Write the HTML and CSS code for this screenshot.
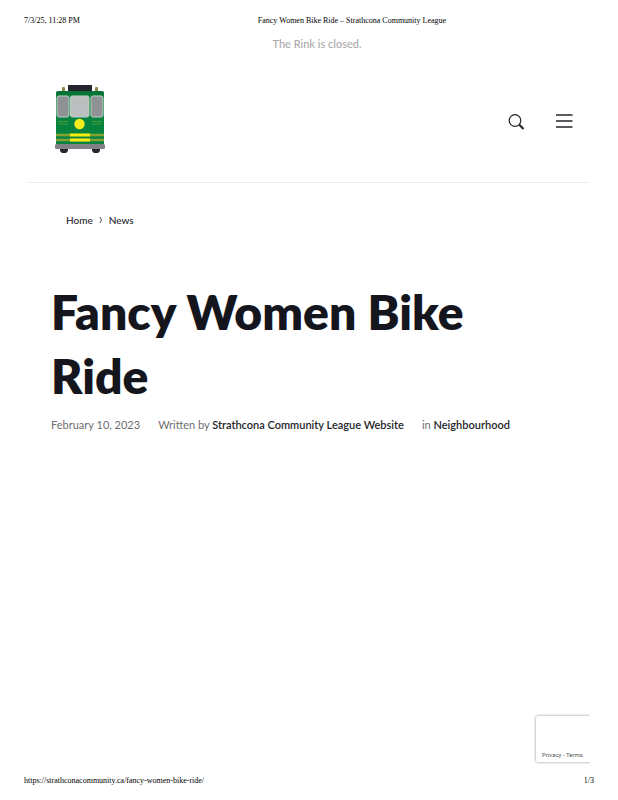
FILE: index.html
```html
<!DOCTYPE html>
<html lang="en">
<head>
<meta charset="utf-8">
<meta name="viewport" content="width=device-width, initial-scale=1">
<title>Fancy Women Bike Ride – Strathcona Community League</title>
<link rel="stylesheet" href="styles.css">
</head>
<body>
<div class="sheet-row sheet-top">
  <span>7/3/25, 11:28 PM</span>
  <span class="sheet-title">Fancy Women Bike Ride – Strathcona Community League</span>
</div>
<div class="page">
  <p class="notice">The Rink is closed.</p>
  <header class="site-header">
    <a class="logo" href="#" aria-label="Strathcona Community League">
      <svg width="52" height="72" viewBox="0 0 52 72" aria-hidden="true">
        <rect x="14" y="2" width="24" height="6" fill="#25262b"/>
        <rect x="8" y="4" width="3" height="5" rx="1" fill="#8a8a4a"/>
        <rect x="41" y="4" width="3" height="5" rx="1" fill="#8a8a4a"/>
        <path d="M2 11Q2 8 5 8H47Q50 8 50 11V61H2Z" fill="#08833f"/>
        <path d="M2 12V10Q2 8 5 8H47Q50 8 50 10V12Z" fill="#087239"/>
        <rect x="3" y="13" width="12" height="21" rx="2" fill="#8e9295" stroke="#b9cfc1"/>
        <rect x="16.500" y="13" width="18.500" height="21" rx="2" fill="#bcbec0" stroke="#b9cfc1"/>
        <rect x="37" y="13" width="12" height="21" rx="2" fill="#8e9295" stroke="#b9cfc1"/>
        <path d="M4 38.500H14M4 41H14M38 38.500H48M38 41H48" stroke="#479b35"/>
        <circle cx="25.500" cy="41" r="5.200" fill="#f3ed20"/>
        <path d="M2 52H50M2 57H50" stroke="#85a331" stroke-width="2.500"/>
        <path d="M16 52H36M16 57H36" stroke="#f7ec13" stroke-width="3"/>
        <rect x="1" y="61" width="50" height="5" rx="1.500" fill="#808285"/>
        <path d="M6 66H14V68L12 70H8L6 68ZM38 66H46V68L44 70H40L38 68Z" fill="#25262b"/>
      </svg>
    </a>
    <div class="actions">
      <button class="icon-button" type="button" aria-label="Search">
        <svg width="18" height="18" viewBox="0 0 18 18" fill="none" stroke="#25262b" aria-hidden="true">
          <circle cx="7" cy="7.500" r="5.800" stroke-width="1.200"/>
          <path d="M11.300 11.800L15.500 16" stroke-width="2.200"/>
        </svg>
      </button>
      <button class="icon-button" type="button" aria-label="Menu">
        <svg width="18" height="18" viewBox="0 0 18 18" stroke="#25262b" stroke-width="1.600" aria-hidden="true">
          <path d="M0 2H16.500M0 8H16.500M0 14H16.500"/>
        </svg>
      </button>
    </div>
  </header>
  <nav class="breadcrumb" aria-label="Breadcrumb">
    <a href="#">Home</a>
    <svg width="4" height="8" viewBox="0 0 4 8" fill="none" stroke="#55565b" aria-hidden="true"><path d="M1 1Q4 4 1 7"/></svg>
    <a href="#">News</a>
  </nav>
  <main class="article">
    <h1>Fancy Women Bike Ride</h1>
    <div class="meta">
      <span>February 10, 2023</span>
      <span>Written by <a href="#">Strathcona Community League Website</a></span>
      <span>in <a href="#">Neighbourhood</a></span>
    </div>
  </main>
  <aside class="privacy"><a href="#">Privacy</a> - <a href="#">Terms</a></aside>
</div>
<div class="sheet-row sheet-bottom">
  <span>https://strathconacommunity.ca/fancy-women-bike-ride/</span>
  <span>1/3</span>
</div>
</body>
</html>
```
FILE: styles.css
```css
* { box-sizing: border-box; }
body {
  margin: 0;
  min-height: 100vh;
  display: flex;
  flex-direction: column;
  background: #fff;
  color: #25262b;
  font-family: Lato, sans-serif;
}
a { color: inherit; text-decoration: none; }
.sheet-row {
  display: flex;
  justify-content: space-between;
  padding: 0 24px;
  font: 8px/12px "Liberation Serif", serif;
  color: #000;
}
.sheet-top { padding-top: 15px; }
.sheet-bottom { padding-bottom: 13px; }
.sheet-title { flex: 1; padding-left: 30px; text-align: center; }
.page {
  flex: 1;
  display: flex;
  flex-direction: column;
  margin: 0 28px;
}
.notice {
  margin: 9px 0 0;
  padding-left: 16px;
  text-align: center;
  font-size: 11px;
  line-height: 16px;
  font-weight: 500;
  color: #aaa;
}
.site-header {
  display: flex;
  justify-content: space-between;
  align-items: center;
  padding: 31px 16px 27px 26px;
  border-bottom: 1px solid #ededed;
}
.logo svg, .icon-button svg { display: block; }
.actions { display: flex; gap: 30px; padding-top: 6px; }
.icon-button { padding: 0; border: 0; background: none; }
.breadcrumb {
  display: flex;
  align-items: center;
  gap: 6px;
  padding: 29px 38px 0;
  font-size: 10px;
  line-height: 16px;
  font-weight: 500;
}
.article { padding: 52px 23px 0; }
h1 {
  margin: 0;
  padding-right: 32px;
  font-size: 48px;
  line-height: 64px;
  font-weight: 800;
  color: #15161d;
}
.meta {
  display: flex;
  flex-wrap: wrap;
  column-gap: 18px;
  margin-top: 9px;
  font-size: 11px;
  line-height: 16px;
  color: #6d6d70;
}
.meta a { font-weight: 600; color: #25262b; }
.privacy {
  align-self: flex-end;
  margin-top: auto;
  margin-bottom: 13px;
  width: 54px;
  height: 46px;
  padding: 34px 0 0 6px;
  border-radius: 2px 0 0 2px;
  box-shadow: 0 0 3px #888;
  clip-path: inset(-4px 0 -4px -4px);
  font: 6px/10px Roboto, sans-serif;
  color: #555;
  white-space: nowrap;
}
```
